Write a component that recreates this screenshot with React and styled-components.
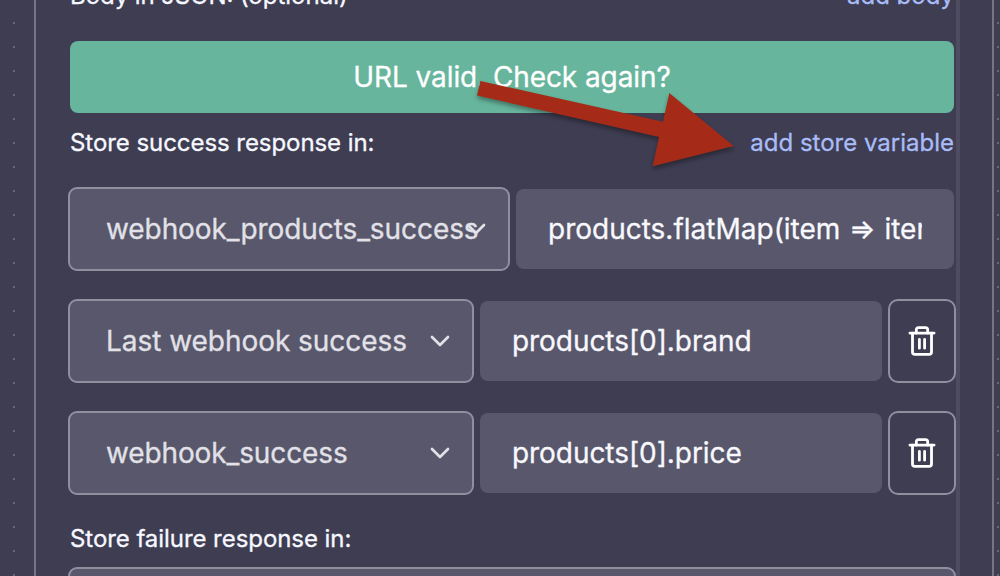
import React from "react";
import styled, { createGlobalStyle } from "styled-components";

const Global = createGlobalStyle`
  *, *::before, *::after { box-sizing: border-box; }
  body {
    margin: 0;
    overflow: hidden;
    background: #3e3d51;
    font-family: Inter, "Liberation Sans", sans-serif;
    color: #f7f8ff;
    -webkit-text-stroke: 0.3px currentColor;
  }
`;

const Canvas = styled.div`
  height: 576px;
  overflow: hidden;
  padding-left: 34px;
  background-color: #3e3d51;
  background-image: conic-gradient(from 270deg at 2px 2px, #69687a 90deg, transparent 0);
  background-size: 24px 24px;
  background-position: 13px 22px;
`;

const Panel = styled.section`
  width: 960px;
  height: 576px;
  overflow: hidden;
  border: solid #777584;
  border-width: 0 2px;
  background: #3e3d51;
`;

const ScrollArea = styled.div`
  width: 924px;
  height: 576px;
  overflow: hidden;
  padding-left: 32px;
  border-right: 4px solid #4d4c60;
`;

const LabelRow = styled.div`
  display: flex;
  justify-content: space-between;
  align-items: center;
  height: ${(p) => p.$height}px;
  margin: ${(p) => p.$top || 0}px 0 ${(p) => p.$bottom || 0}px;
  padding: 2px 2px 0;
  font-size: 24px;
  line-height: 30px;
  white-space: nowrap;
`;

const Label = styled.span`
  letter-spacing: ${(p) => (p.$contextual ? "normal" : "-0.06px")};
  word-spacing: ${(p) => (p.$contextual ? "-0.4px" : "normal")};
`;

const AddLink = styled.a`
  color: #a9bcf7;
`;

const CheckButton = styled.button`
  display: block;
  width: 884px;
  height: 72px;
  margin: 0 2px;
  padding: 0;
  border: 0;
  border-radius: 8px;
  background: #67b59c;
  color: #fff;
  font: 400 28px/34px Inter, "Liberation Sans", sans-serif;
  letter-spacing: -0.09px;
  -webkit-text-stroke: 0.3px currentColor;
`;

const FieldRow = styled.div`
  display: flex;
  align-items: center;
  gap: 6px;
  height: 84px;
  margin-bottom: 28px;
  font-size: 28px;
  line-height: 34px;
  white-space: nowrap;
`;

const Select = styled.div`
  display: flex;
  align-items: center;
  justify-content: space-between;
  flex: none;
  width: ${(p) => p.$width}px;
  height: 84px;
  padding: 0 22px 0 36px;
  border: 2px solid #908f9e;
  border-radius: 9px;
  background: #58576b;
  color: #e2e1e8;
`;

const SelectText = styled.span`
  flex: 1;
  min-width: 0;
  letter-spacing: ${(p) => p.$spacing}px;
`;

const TextField = styled.div`
  flex: none;
  width: ${(p) => p.$width}px;
  height: 80px;
  padding: 23px 32px;
  border-radius: 8px;
  background: #58576b;
  color: #f8f8fd;
`;

const TextValue = styled.div`
  overflow: hidden;
  letter-spacing: ${(p) => (p.$contextual ? "normal" : "-0.06px")};
  word-spacing: ${(p) => (p.$contextual ? "0.8px" : "normal")};
`;

const DeleteButton = styled.button`
  display: grid;
  place-items: center;
  width: 68px;
  height: 84px;
  padding: 0;
  border: 2px solid #908f9e;
  border-radius: 10px;
  background: transparent;
  color: #fff;
`;

const Arrow = styled.svg`
  position: absolute;
  left: 470px;
  top: 75px;
  overflow: visible;
  filter: drop-shadow(0 3px 2px rgba(0, 0, 0, 0.35));
`;

const Chevron = () => (
  <svg width="20" height="12" viewBox="0 0 20 12" fill="none" stroke="currentColor" strokeWidth="2.7" strokeLinecap="round" strokeLinejoin="round">
    <path d="M2 2 10 10 18 2" />
  </svg>
);

const Trash = () => (
  <svg width="28" height="32" viewBox="0 0 28 32" fill="none" stroke="currentColor" strokeWidth="2.8" strokeLinecap="round" strokeLinejoin="round">
    <path d="M1.9 8.1H26.1" />
    <path d="M8.3 8V4.8Q8.3 2.6 10.5 2.6H17.5Q19.7 2.6 19.7 4.8V8" />
    <path d="M4.5 8.1V27Q4.5 29.4 6.9 29.4H21.1Q23.5 29.4 23.5 27V8.1" />
    <path d="M11.4 14.4V23.2M16.6 14.4V23.2" />
  </svg>
);

const rows = [
  { variable: "webhook_products_success", path: "products.flatMap(item => item.tags)", contextual: true, spacing: -0.08, selectWidth: 442, fieldWidth: 438 },
  { variable: "Last webhook success", path: "products[0].brand", spacing: -0.04, selectWidth: 406, fieldWidth: 402, removable: true },
  { variable: "webhook_success", path: "products[0].price", spacing: -0.12, selectWidth: 406, fieldWidth: 402, removable: true },
];

export default function App() {
  return (
    <>
      <Global />
      <Canvas>
        <Panel>
          <ScrollArea>
            <LabelRow $height={58} $top={-34} $bottom={17}>
              <Label $contextual>Body in JSON: (optional)</Label>
              <AddLink>add body</AddLink>
            </LabelRow>
            <CheckButton>URL valid. Check again?</CheckButton>
            <LabelRow $height={58} $bottom={16}>
              <Label>Store success response in:</Label>
              <AddLink>add store variable</AddLink>
            </LabelRow>
            {rows.map((row) => (
              <FieldRow key={row.variable}>
                <Select $width={row.selectWidth}>
                  <SelectText $spacing={row.spacing}>{row.variable}</SelectText>
                  <Chevron />
                </Select>
                <TextField $width={row.fieldWidth}>
                  <TextValue $contextual={row.contextual}>{row.path}</TextValue>
                </TextField>
                {row.removable && (
                  <DeleteButton aria-label="Remove">
                    <Trash />
                  </DeleteButton>
                )}
              </FieldRow>
            ))}
            <LabelRow $height={44} $top={-7} $bottom={7}>
              <Label>Store failure response in:</Label>
            </LabelRow>
            <Select $width={888} />
          </ScrollArea>
        </Panel>
      </Canvas>
      <Arrow width="270" height="100" viewBox="470 75 270 100">
        <path d="M480.4 81 663 121.7 669.3 93 733.7 146 652.7 166.3 659 137 477 95.5Z" fill="#a52b18" />
      </Arrow>
    </>
  );
}
